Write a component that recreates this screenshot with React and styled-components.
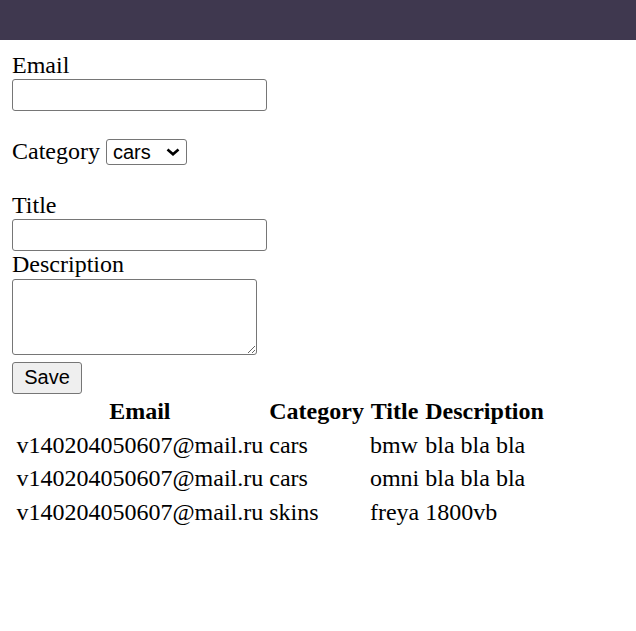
import React from 'react';
import styled, { createGlobalStyle } from 'styled-components';

const GlobalStyle = createGlobalStyle`
    body {
        margin: 0;
        font-family: "Liberation Serif", "Times New Roman", serif;
        font-size: 24px;
        color: #000;
        background: #fff;
    }
`;

const TopBar = styled.header`
    height: 40px;
    background: #3f384f;
`;

const Form = styled.form`
    padding: 11.5px 12px 0;
`;

const Label = styled.label`
    display: block;
    line-height: 27.6px;
    margin-top: ${props => props.gap || 0}px;
`;

const TextInput = styled.input`
    display: block;
    box-sizing: border-box;
    width: 255px;
    height: 32px;
    margin: 0;
    padding: 1px 3px;
    border: 1px solid #767676;
    border-radius: 3px;
    font: 20px "Liberation Sans", Arial, sans-serif;
    background: #fff;
`;

const Row = styled.div`
    display: flex;
    align-items: center;
    gap: 6px;
    height: 27.6px;
    margin-top: 27px;
    line-height: 27.6px;
`;

const SelectWrap = styled.span`
    position: relative;
    display: inline-flex;
`;

const Select = styled.select`
    appearance: none;
    box-sizing: border-box;
    width: 81px;
    height: 26px;
    margin: 0;
    padding: 0 0 0 6px;
    border: 1px solid #767676;
    border-radius: 3px;
    background: #fff;
    color: #000;
    font: 20px "Liberation Sans", Arial, sans-serif;
`;

const Chevron = styled.svg`
    position: absolute;
    right: 7px;
    top: 9px;
    pointer-events: none;
`;

const TextArea = styled.textarea`
    display: block;
    box-sizing: border-box;
    width: 245px;
    height: 76px;
    margin: 0;
    padding: 3px;
    border: 1px solid #767676;
    border-radius: 3px;
    font: 20px "Liberation Mono", monospace;
`;

const SaveButton = styled.button`
    display: block;
    box-sizing: border-box;
    width: 70px;
    height: 32px;
    margin-top: 7px;
    padding: 0;
    border: 1px solid #767676;
    border-radius: 3px;
    background: #efefef;
    color: #000;
    font: 20px "Liberation Sans", Arial, sans-serif;
`;

const Table = styled.table`
    border-spacing: 3px;
    font-size: 24px;
`;

const Th = styled.th`
    padding: 1.5px;
    line-height: 27.5px;
    font-weight: bold;
    text-align: center;
`;

const Td = styled.td`
    padding: 1.5px;
    line-height: 27.5px;
    text-align: left;
`;

const posts = [
    { email: 'v140204050607@mail.ru', category: 'cars', title: 'bmw', description: 'bla bla bla' },
    { email: 'v140204050607@mail.ru', category: 'cars', title: 'omni', description: 'bla bla bla' },
    { email: 'v140204050607@mail.ru', category: 'skins', title: 'freya', description: '1800vb' },
];

export default function App() {
    return (
        <>
            <GlobalStyle />
            <TopBar />
            <Form onSubmit={e => e.preventDefault()}>
                <Label htmlFor="email">Email</Label>
                <TextInput id="email" type="text" />

                <Row>
                    <label htmlFor="category">Category</label>
                    <SelectWrap>
                        <Select id="category" defaultValue="cars">
                            <option value="cars">cars</option>
                            <option value="skins">skins</option>
                        </Select>
                        <Chevron width="14" height="8" viewBox="0 0 14 8">
                            <path d="M1.5 1.5 L7 6.2 L12.5 1.5" fill="none" stroke="#000" strokeWidth="2.6" />
                        </Chevron>
                    </SelectWrap>
                </Row>

                <Label htmlFor="title" gap={26}>Title</Label>
                <TextInput id="title" type="text" />
                <Label htmlFor="description">Description</Label>
                <TextArea id="description" />
                <SaveButton type="submit">Save</SaveButton>

                <Table>
                    <thead>
                        <tr>
                            <Th>Email</Th>
                            <Th>Category</Th>
                            <Th>Title</Th>
                            <Th>Description</Th>
                        </tr>
                    </thead>
                    <tbody>
                        {posts.map((p, i) => (
                            <tr key={i}>
                                <Td>{p.email}</Td>
                                <Td>{p.category}</Td>
                                <Td>{p.title}</Td>
                                <Td>{p.description}</Td>
                            </tr>
                        ))}
                    </tbody>
                </Table>
            </Form>
        </>
    );
}
